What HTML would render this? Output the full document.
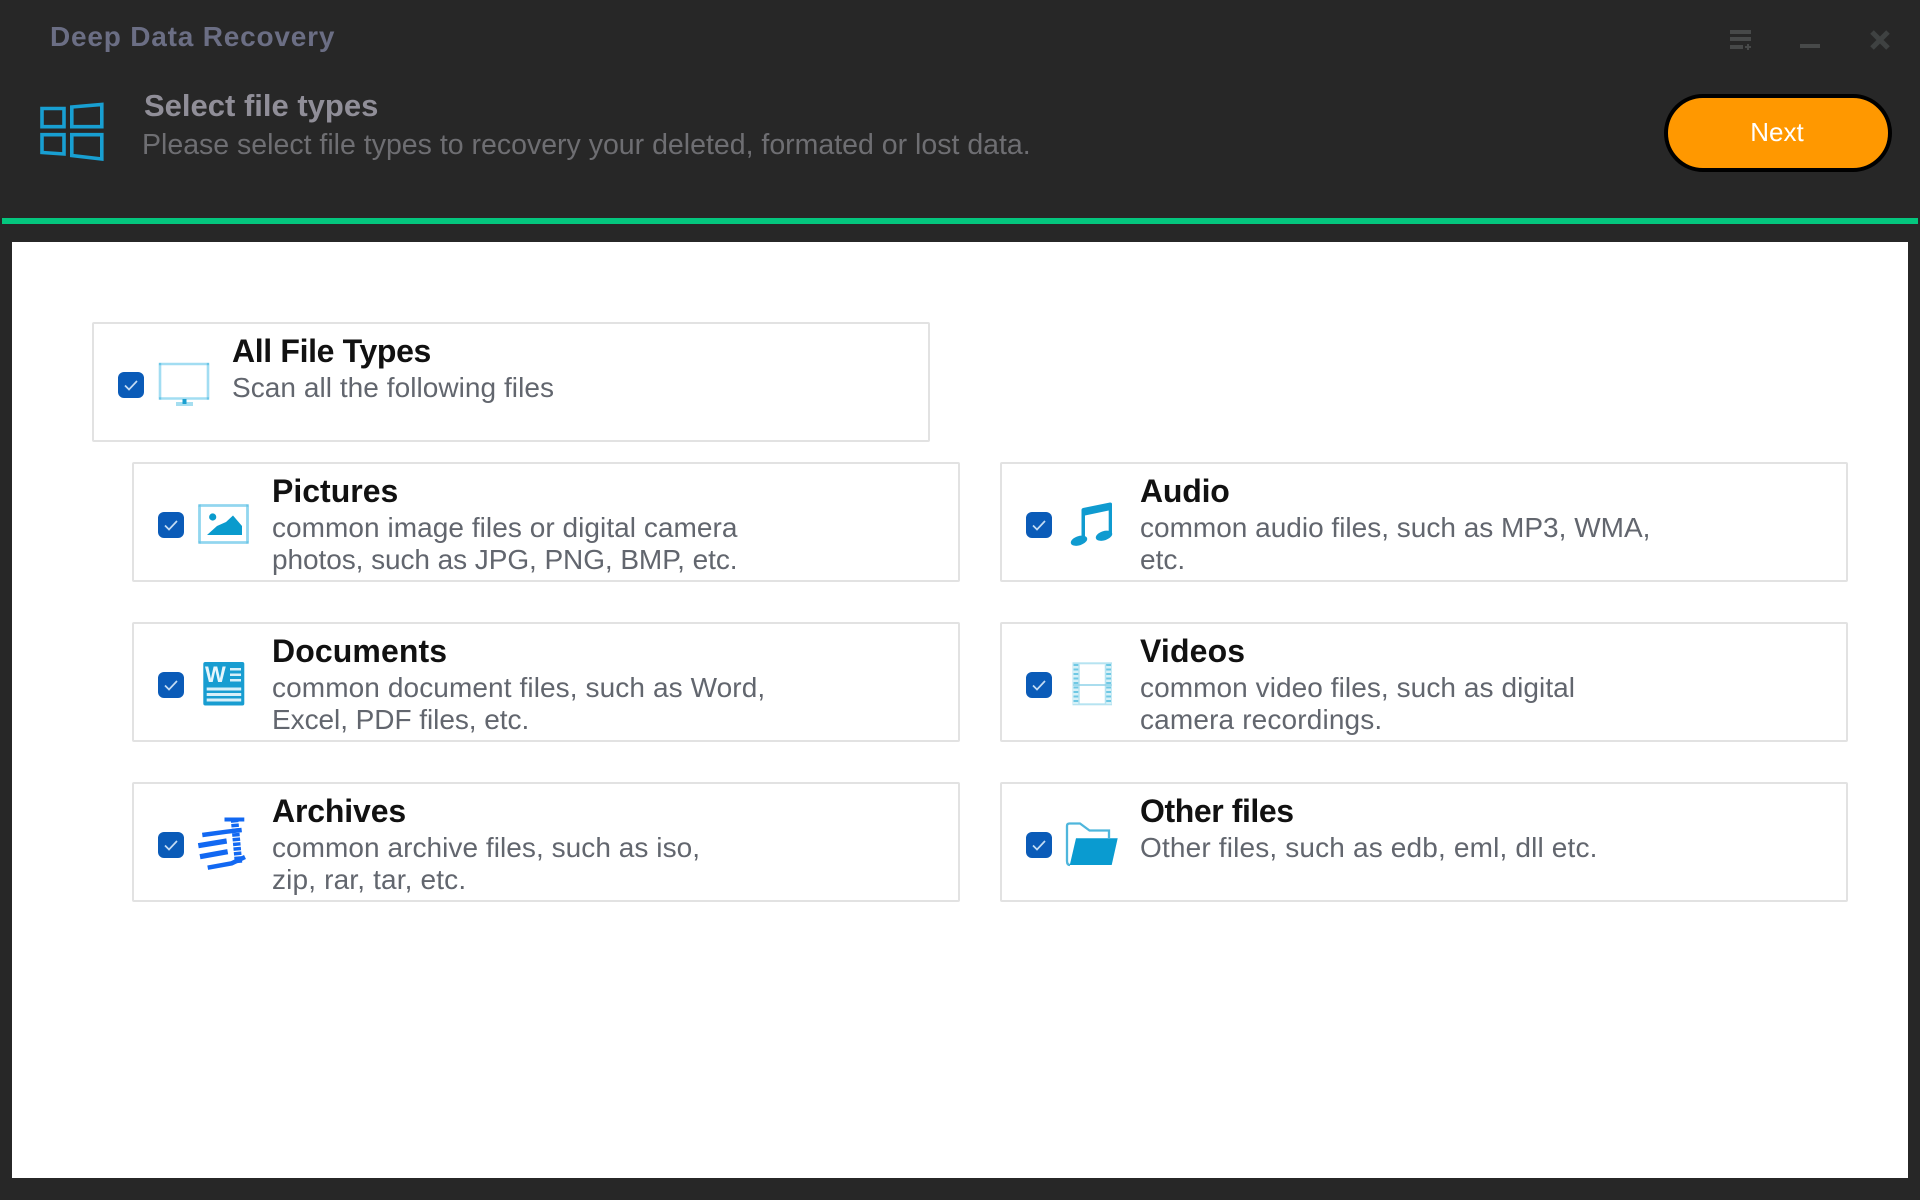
<!DOCTYPE html>
<html><head><meta charset="utf-8"><title>Deep Data Recovery</title>
<style>
html,body{margin:0;padding:0;width:1920px;height:1200px;overflow:hidden;background:#272727;font-family:"Liberation Sans",Arial,sans-serif}
.a{position:absolute;white-space:nowrap;filter:blur(.35px)}
.panel{position:absolute;left:12px;top:242px;width:1896px;height:936px;background:#fff}
.bar{position:absolute;left:2px;top:218px;width:1916px;height:6px;background:#04c67e}
.card{position:absolute;height:120px;box-shadow:inset 0 0 0 2px #e2e2e2;border-radius:2px;background:#fff}
.cb{position:absolute;left:26px;top:50px;width:26px;height:26px;border-radius:6px;background:#0a5bb8}
.cb svg{position:absolute;left:0;top:0}
.t{position:absolute;left:140px;top:10.9px;font-size:32px;line-height:36px;font-weight:bold;color:#111;white-space:nowrap;filter:blur(.35px)}
.d{position:absolute;left:140px;top:50.3px;font-size:28px;line-height:32px;color:#62666e;white-space:nowrap;filter:blur(.35px)}
.next{position:absolute;left:1664px;top:94px;width:226px;height:78px;box-sizing:content-box;height:70px;border:4px solid #000;border-radius:39px;background:#ff9800;color:#fff;font-size:26px;line-height:68px;text-align:center;width:218px;padding-right:2px}
</style></head><body>
<div class="a" style="left:50px;top:21px;font-size:28px;line-height:32px;font-weight:bold;letter-spacing:.8px;color:#6b6e84">Deep Data Recovery</div>
<div class="a" style="left:144px;top:88px;font-size:31px;line-height:36px;font-weight:bold;color:#908e98">Select file types</div>
<div class="a" style="left:142px;top:129px;font-size:28.5px;line-height:32px;color:#6e6e72">Please select file types to recovery your deleted, formated or lost data.</div>
<div class="next">Next</div>
<div class="bar"></div>
<div class="panel"></div>

<div class="card" style="left:92px;top:322px;width:838px"><div class="cb"><svg width="26" height="26"><path d="M7 13.500l4 4 8-8.500" fill="none" stroke="#c4dcf4" stroke-width="1.700"/></svg></div><div class="t" style="letter-spacing:-.35px">All File Types</div><div class="d"><span style="letter-spacing:.05px">Scan all the following files</span></div></div>
<div class="card" style="left:132px;top:462px;width:828px"><div class="cb"><svg width="26" height="26"><path d="M7 13.500l4 4 8-8.500" fill="none" stroke="#c4dcf4" stroke-width="1.700"/></svg></div><div class="t">Pictures</div><div class="d"><span style="letter-spacing:.05px">common image files or digital camera</span><br><span style="letter-spacing:-.07px">photos, such as JPG, PNG, BMP, etc.</span></div></div>
<div class="card" style="left:1000px;top:462px;width:848px"><div class="cb"><svg width="26" height="26"><path d="M7 13.500l4 4 8-8.500" fill="none" stroke="#c4dcf4" stroke-width="1.700"/></svg></div><div class="t" style="letter-spacing:-.2px">Audio</div><div class="d">common audio files, such as MP3, WMA,<br>etc.</div></div>
<div class="card" style="left:132px;top:622px;width:828px"><div class="cb"><svg width="26" height="26"><path d="M7 13.500l4 4 8-8.500" fill="none" stroke="#c4dcf4" stroke-width="1.700"/></svg></div><div class="t" style="letter-spacing:.1px">Documents</div><div class="d"><span style="letter-spacing:.1px">common document files, such as Word,</span><br><span style="letter-spacing:-.05px">Excel, PDF files, etc.</span></div></div>
<div class="card" style="left:1000px;top:622px;width:848px"><div class="cb"><svg width="26" height="26"><path d="M7 13.500l4 4 8-8.500" fill="none" stroke="#c4dcf4" stroke-width="1.700"/></svg></div><div class="t" style="letter-spacing:.15px">Videos</div><div class="d"><span style="letter-spacing:.07px">common video files, such as digital</span><br><span style="letter-spacing:.15px">camera recordings.</span></div></div>
<div class="card" style="left:132px;top:782px;width:828px"><div class="cb"><svg width="26" height="26"><path d="M7 13.500l4 4 8-8.500" fill="none" stroke="#c4dcf4" stroke-width="1.700"/></svg></div><div class="t" style="letter-spacing:-.15px">Archives</div><div class="d"><span style="letter-spacing:.05px">common archive files, such as iso,</span><br><span style="letter-spacing:.15px">zip, rar, tar, etc.</span></div></div>
<div class="card" style="left:1000px;top:782px;width:848px"><div class="cb"><svg width="26" height="26"><path d="M7 13.500l4 4 8-8.500" fill="none" stroke="#c4dcf4" stroke-width="1.700"/></svg></div><div class="t" style="letter-spacing:-.42px">Other files</div><div class="d"><span style="letter-spacing:.16px">Other files, such as edb, eml, dll etc.</span></div></div>

<svg width="1920" height="1200" viewBox="0 0 1920 1200" style="position:absolute;left:0;top:0;filter:blur(.35px)">
<!-- windows -->
<g fill="none" stroke="#189fd2" stroke-width="3.600">
<path d="M42 108.500H64V126.700H42z"/>
<path d="M71.800 107L101.800 104.500V126.700H71.800z"/>
<path d="M42 134.700H64V154L42 152.500z"/>
<path d="M71.800 134.700H101.800V159L71.800 155.500z"/>
</g>
<!-- window controls -->
<g fill="#474949">
<rect x="1730" y="30" width="21" height="4"/><rect x="1730" y="37" width="21" height="4"/><rect x="1730" y="45" width="13" height="4"/>
<rect x="1745" y="46" width="6" height="2"/><rect x="1747" y="44" width="2" height="6"/>
<rect x="1800" y="44" width="20" height="4"/>
</g>
<path d="M1872 32l16 16M1888 32l-16 16" stroke="#3f4242" stroke-width="5" fill="none"/>
<!-- monitor -->
<rect x="160" y="364" width="48" height="34.500" rx="1.500" fill="none" stroke="#a2ddf2" stroke-width="2.600"/>
<g fill="#6cc6e6"><rect x="158.800" y="362.800" width="2.400" height="2.400"/><rect x="206.800" y="362.800" width="2.400" height="2.400"/><rect x="158.800" y="397.300" width="2.400" height="2.400"/><rect x="206.800" y="397.300" width="2.400" height="2.400"/></g>
<rect x="176" y="402" width="17" height="4" fill="#a5def0"/>
<rect x="182.500" y="399" width="4" height="5" fill="#1a9fd0"/>
<!-- picture -->
<rect x="199.500" y="505.500" width="48" height="37" rx="1.500" fill="none" stroke="#92d6ef" stroke-width="2.800"/>
<g fill="#6cc6e6"><rect x="198.300" y="504.300" width="2.400" height="2.400"/><rect x="246.300" y="504.300" width="2.400" height="2.400"/><rect x="198.300" y="541.300" width="2.400" height="2.400"/><rect x="246.300" y="541.300" width="2.400" height="2.400"/></g>
<circle cx="212.700" cy="517" r="3.600" fill="#0a9bcd"/>
<path d="M207 535L217 526L226 522L233 515.500L242 526V535z" fill="#0a9bcd"/>
<!-- document -->
<rect x="203.300" y="662" width="41" height="43.500" rx="2" fill="#189dd1"/>
<text x="205" y="682" font-family="Liberation Sans,sans-serif" font-size="22" font-weight="bold" fill="#e6f6fc">W</text>
<g fill="#d8f0f9">
<rect x="230" y="668" width="11" height="2.500"/><rect x="230" y="673.500" width="11" height="2.500"/><rect x="230" y="679" width="11" height="2.500"/>
<rect x="206.700" y="687.500" width="34.500" height="3"/><rect x="206.700" y="693" width="34.500" height="3"/><rect x="206.700" y="698.500" width="34.500" height="3"/>
</g>
<!-- archive -->
<g fill="none" stroke="#1268f2" stroke-width="5.200">
<path d="M224.500 819.500H244.300" stroke-width="4"/>
<path d="M202.300 835L226.700 831.700L241.700 830" stroke-width="4.500"/>
<path d="M198.300 845.700L226.700 841"/>
<path d="M200 856.700L227.700 851.700"/>
<path d="M207.700 867.700L231.700 863.300L245 857" stroke-width="4.500"/>
<path d="M234.500 819L238.500 863" stroke-width="7.500" stroke-dasharray="3.500 1.200"/>
</g>
<!-- music -->
<g fill="#0f9bd0">
<path d="M1081.500 510Q1081.500 508.500 1083 508L1110 502.500Q1112 502.500 1112 504V534H1108.700V510.500L1085 515.500V541H1081.500z"/>
<ellipse cx="1079" cy="540.700" rx="8.500" ry="4.600" transform="rotate(-18 1079 540.700)"/>
<ellipse cx="1104" cy="535.700" rx="8.500" ry="4.600" transform="rotate(-18 1104 535.700)"/>
</g>
<!-- film -->
<rect x="1073.500" y="663.300" width="37.500" height="41" fill="none" stroke="#b6e3f1" stroke-width="2"/>
<rect x="1073" y="664" width="6" height="40" fill="#d6f0f7"/><rect x="1105.500" y="664" width="6" height="40" fill="#d6f0f7"/>
<path d="M1076 664V704M1108.500 664V704" stroke="#6ec8e4" stroke-width="5" stroke-dasharray="2 2.500" fill="none"/>
<path d="M1079 664.500V704M1105.500 664.500V704" stroke="#b5e3f1" stroke-width="1.500" fill="none"/>
<path d="M1073 685H1111.500" stroke="#8ed2e8" stroke-width="1.500"/>
<!-- folder -->
<path d="M1070 865Q1067 865 1067 861V826Q1067 823.500 1069.500 823.500H1080L1089.500 830.500H1109V838" fill="none" stroke="#4fb6dc" stroke-width="2.300"/>
<path d="M1076 838.300H1117.700L1111.700 865H1069.800z" fill="#0a9bd0"/>
</svg>
</body></html>
